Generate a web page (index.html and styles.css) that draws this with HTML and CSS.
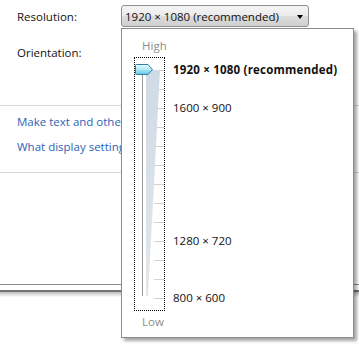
FILE: index.html
```html
<!DOCTYPE html>
<html lang="en">

<head>
  <meta charset="UTF-8">
  <title>Screen Resolution</title>
  <link rel="stylesheet" href="styles.css">
</head>

<body>
  <div class="page">
    <div class="row">
      <span class="label">Resolution:</span>
      <div class="combo">
        <span class="combo-text">1920 × 1080 (recommended)</span>
        <span class="arrow"></span>
      </div>
    </div>
    <div class="row orient">
      <span class="label">Orientation:</span>
    </div>

    <div class="sep sep-top"></div>
    <a class="link first" href="#">Make text and other items larger or smaller</a>
    <a class="link" href="#">What display settings should I choose?</a>
    <div class="sep sep-mid"></div>

    <div class="edge"></div>
    <div class="edge-shade"></div>

    <!-- open dropdown of the resolution box -->
    <div class="dropdown">
      <div class="slider-col">
        <div class="end high">High</div>
        <div class="focus">
          <svg width="29" height="252" viewBox="0 0 29 252">
            <defs>
              <linearGradient id="wedge" x1="0" y1="0" x2="0" y2="1">
                <stop offset="0" stop-color="#cfdae4"/>
                <stop offset="1" stop-color="#e3e7eb"/>
              </linearGradient>
              <linearGradient id="thumb" x1="0" y1="0" x2="0" y2="1">
                <stop offset="0" stop-color="#eafcff"/>
                <stop offset="0.5" stop-color="#aee9f7"/>
                <stop offset="1" stop-color="#62c3e0"/>
              </linearGradient>
            </defs>
            <g stroke="#d2d2d2" stroke-width="1">
              <line x1="19" y1="12.5" x2="29" y2="12.5"/>
              <line x1="19" y1="31.5" x2="29" y2="31.5"/>
              <line x1="19" y1="50.5" x2="29" y2="50.5"/>
              <line x1="19" y1="69.5" x2="29" y2="69.5"/>
              <line x1="19" y1="88.5" x2="29" y2="88.5"/>
              <line x1="19" y1="107.5" x2="29" y2="107.5"/>
              <line x1="19" y1="126.5" x2="29" y2="126.5"/>
              <line x1="19" y1="145.5" x2="29" y2="145.5"/>
              <line x1="19" y1="164.5" x2="29" y2="164.5"/>
              <line x1="19" y1="183.5" x2="29" y2="183.5"/>
              <line x1="19" y1="202.5" x2="29" y2="202.5"/>
              <line x1="19" y1="221.5" x2="29" y2="221.5"/>
              <line x1="19" y1="240.5" x2="29" y2="240.5"/>
            </g>
            <polygon points="11,12 25,12 13,238 11,238" fill="url(#wedge)"/>
            <line x1="7.5" y1="16" x2="7.5" y2="238" stroke="#9c9c9c" stroke-width="1"/>
            <path d="M1.5,6.5 H13 L17.5,11.5 L13,16.5 H1.5 Q0.5,16.5 0.5,15.5 V7.5 Q0.5,6.5 1.5,6.5 Z"
              fill="url(#thumb)" stroke="#2f7eab" stroke-width="1"/>
          </svg>
        </div>
        <div class="end low">Low</div>
      </div>

      <div class="options">
        <div class="opt current">1920 × 1080 (recommended)</div>
        <div class="opt"></div>
        <div class="opt">1600 × 900</div>
        <div class="opt"></div>
        <div class="opt"></div>
        <div class="opt"></div>
        <div class="opt"></div>
        <div class="opt"></div>
        <div class="opt"></div>
        <div class="opt">1280 × 720</div>
        <div class="opt"></div>
        <div class="opt"></div>
        <div class="opt">800 × 600</div>
      </div>
    </div>
  </div>
</body>

</html>
```

FILE: styles.css
```css
body {
  margin: 0;
  padding: 0;
  background-color: #ffffff;
  font-family: "Open Sans", "Noto Sans", sans-serif;
  font-size: 11.5px;
  color: #111111;
}

.page {
  position: relative;
  width: 359px;
  height: 346px;
  overflow: hidden;
  padding-top: 5px;
  box-sizing: border-box;
}

.row {
  display: flex;
  align-items: center;
  height: 22px;
}

.row.orient {
  margin-top: 14px;
}

.label {
  width: 104px;
  padding-left: 17px;
}

.combo {
  display: flex;
  align-items: center;
  justify-content: space-between;
  width: 188px;
  height: 22px;
  box-sizing: border-box;
  padding: 0 5px 0 3px;
  border: 1px solid #8e8f8f;
  border-radius: 3px;
  background: linear-gradient(#f4f4f4, #ebebeb 50%, #dddddd 51%, #cfcfcf);
}

.arrow {
  width: 0;
  height: 0;
  border-left: 3.5px solid transparent;
  border-right: 3.5px solid transparent;
  border-top: 4px solid #000;
  margin-top: 2px;
}

.sep {
  height: 1px;
  background-color: #d6d6d6;
}

.sep-top {
  margin-top: 42px;
}

.link {
  display: block;
  padding-left: 17px;
  line-height: 16px;
  margin-top: 9px;
  color: #2f63b3;
  text-decoration: none;
  white-space: nowrap;
}

.link.first {
  margin-top: 8px;
}

.sep-mid {
  margin-top: 17px;
}

.edge {
  margin-top: 111px;
  height: 5px;
  border-top: 1px solid #8a8a8a;
}

.edge-shade {
  height: 5px;
  border-top: 2px solid #737373;
  background: linear-gradient(#bdbdbd, #ffffff);
}

/* dropdown */

.dropdown {
  position: absolute;
  left: 121px;
  top: 28px;
  width: 233px;
  height: 310px;
  box-sizing: border-box;
  border: 1px solid #888b8f;
  background-color: #ffffff;
  box-shadow: 3px 3px 3px rgba(0, 0, 0, 0.35);
  display: flex;
  padding-left: 12px;
}

.slider-col {
  width: 31px;
}

.end {
  line-height: 16px;
  padding-left: 8px;
  color: #8d8d8d;
  white-space: nowrap;
}

.high {
  padding-top: 9px;
  margin-bottom: 3px;
}

.low {
  margin-top: 3px;
}

.focus {
  width: 31px;
  height: 254px;
  box-sizing: border-box;
  border: 1px dotted #000;
}

.focus svg {
  display: block;
}

.options {
  margin-left: 8px;
  padding-top: 31px;
}

.opt {
  height: 19px;
  line-height: 19px;
  white-space: nowrap;
}

.opt.current {
  font-weight: bold;
  letter-spacing: 0.2px;
}
```
